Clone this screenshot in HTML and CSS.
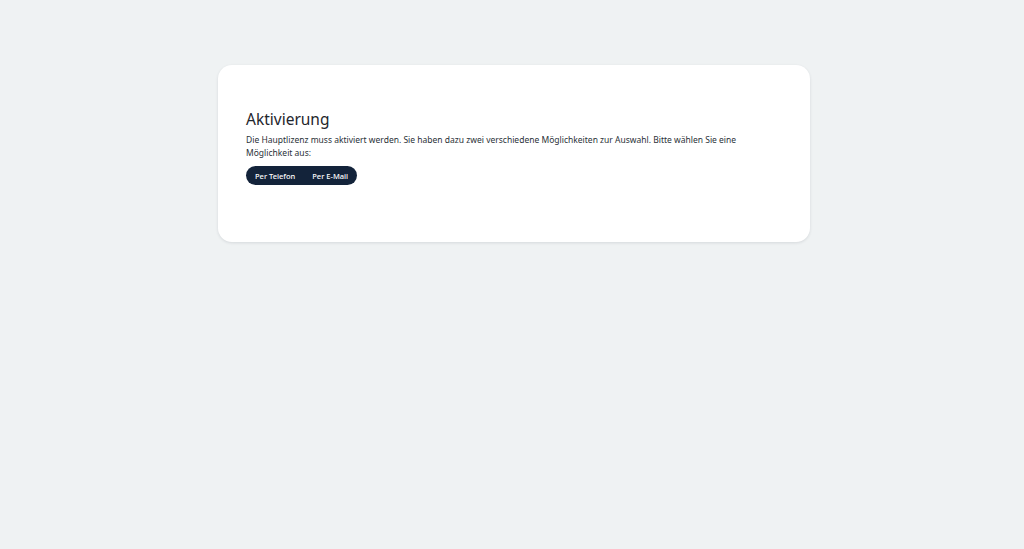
FILE: index.html
```html
<!DOCTYPE html>
<html lang="de">
<head>
<meta charset="utf-8">
<title>Aktivierung</title>
<link rel="stylesheet" href="styles.css">
</head>
<body>
<main class="page">
  <section class="card">
    <h1 class="title">Aktivierung</h1>
    <p class="text">Die Hauptlizenz muss aktiviert werden. Sie haben dazu zwei verschiedene Möglichkeiten zur Auswahl. Bitte wählen Sie eine Möglichkeit aus:</p>
    <div class="choice">
      <button class="choice-btn" type="button">Per Telefon</button>
      <button class="choice-btn" type="button">Per E-Mail</button>
    </div>
  </section>
</main>
</body>
</html>
```
FILE: styles.css
```css
html, body {
  margin: 0;
  padding: 0;
}
body {
  background: #eff2f3;
  font-family: "Noto Sans", "Open Sans", sans-serif;
  color: #232a31;
  width: 1024px;
  height: 549px;
}
.page {
  display: flex;
  justify-content: center;
  padding-top: 65px;
}
.card {
  width: 536px;
  margin-left: 4px;
  background: #ffffff;
  border-radius: 14px;
  box-shadow: 0 1px 3px rgba(30, 45, 60, 0.12);
  padding: 44px 28px 57px;
}
.title {
  margin: 0;
  font-size: 15.5px;
  font-weight: 400;
  line-height: 20px;
  color: #1f262d;
}
.text {
  margin: 4px 0 0;
  font-size: 8.5px;
  line-height: 13px;
  width: 500px;
  color: #2a3137;
}
.choice {
  display: inline-flex;
  gap: 17px;
  margin-top: 7px;
  background: #13233a;
  border-radius: 10px;
  padding: 0 9px;
}
.choice-btn {
  border: 0;
  background: transparent;
  color: #ffffff;
  font-family: "Noto Sans", sans-serif;
  font-size: 7.5px;
  font-weight: 500;
  height: 19px;
  padding: 0;
  margin: 0;
}
```
